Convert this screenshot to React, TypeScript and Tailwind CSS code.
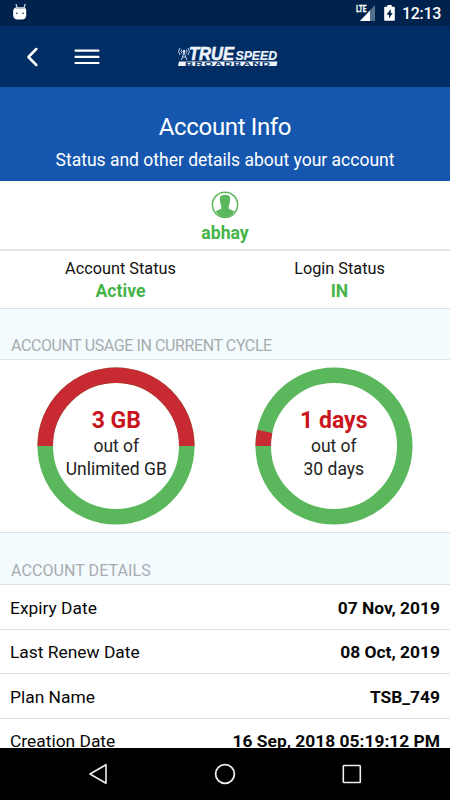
import React from 'react';

const details = [
  { label: 'Expiry Date', value: '07 Nov, 2019' },
  { label: 'Last Renew Date', value: '08 Oct, 2019' },
  { label: 'Plan Name', value: 'TSB_749' },
  { label: 'Creation Date', value: '16 Sep, 2018 05:19:12 PM' },
];

function StatusBar() {
  return (
    <div className="flex h-[26px] shrink-0 items-center bg-[#00234d] pl-3 pr-[9px] text-white">
      <svg width="16" height="20" viewBox="0 0 16 20" fill="#fff">
        <path d="M4 1 5.2 5M13.2 1 12 5" stroke="#c9d5e2" strokeWidth="1.2" />
        <path d="M1.2 7Q1.8 4.5 4.5 4.5H11.8Q14 4.5 14.2 7V12.5Q13.7 16.4 10 16.4H5.5Q1.6 16.4 1.2 12.5Z" />
        <path d="M3.5 4.3h9v1.9H3.5z" fill="#b9c7d7" />
        <circle cx="4.8" cy="10.3" r=".9" fill="#32506f" />
        <circle cx="11" cy="10.3" r=".9" fill="#32506f" />
      </svg>
      <svg className="ml-auto" width="20" height="18" viewBox="0 0 20 18">
        <path d="M19 1V17H4Z" fill="#54708c" />
        <path d="M14 6.5V17H4Z" fill="#fff" />
        <path d="M0 0H11V9H0Z" fill="#00234d" />
        <text x="0" y="8.4" fontSize="9.5" fontWeight="700" fill="#fff" stroke="#fff" strokeWidth=".3" textLength="10.5" lengthAdjust="spacingAndGlyphs" fontFamily="Roboto, sans-serif">LTE</text>
      </svg>
      <svg className="ml-2" width="11" height="18" viewBox="0 0 11 18">
        <path d="M3.3 1h4.4v1.8H10q.8 0 .8.8V16q0 .8-.8.8H1q-.8 0-.8-.8V3.6q0-.8.8-.8h2.3Z" fill="#fff" />
        <path d="M6.7 5 2.5 10.7H5V14.6L8.7 8.9H6.7Z" fill="#00234d" />
      </svg>
      <span className="ml-[7px] mt-px w-[39px] whitespace-nowrap text-[16px] font-medium leading-5 tracking-[-0.3px]">12:13</span>
    </div>
  );
}

function Logo() {
  return (
    <svg width="102" height="22" viewBox="0 0 102 22" fill="#eef3fa" fontFamily="Liberation Sans, sans-serif" fontWeight="700">
      <g fill="none" stroke="#c3d0e2" strokeWidth="1">
        <path d="M3 2Q0 5.5 3 9M5 3.5Q3 5.5 5 7.5M11 2Q14 5.5 11 9M9.2 3.5Q11 5.5 9.2 7.5M7 6 4.5 14M7 6 9.8 14M5.4 11H8.9" />
      </g>
      <circle cx="7" cy="5.2" r="1.2" />
      <text x="12" y="14" fontSize="17.5" fontStyle="italic" textLength="45" lengthAdjust="spacingAndGlyphs" stroke="#eef3fa" strokeWidth=".6">TRUE</text>
      <text x="58.5" y="14" fontSize="12.5" fontStyle="italic" textLength="41.5" lengthAdjust="spacingAndGlyphs" stroke="#eef3fa" strokeWidth=".2">SPEED</text>
      <path d="M2 15.5H100.5L99.5 20H1Z" />
      <text transform="translate(8 19.6) scale(2.3 1)" fontSize="5" fill="#002d64" textLength="37" lengthAdjust="spacing">BROADBAND</text>
    </svg>
  );
}

function NavBar() {
  return (
    <header className="flex h-[61px] shrink-0 items-center bg-[#002d64] pl-[25px]">
      <svg width="14" height="22" viewBox="0 0 14 22" fill="none" stroke="#fff" strokeWidth="2.5" strokeLinecap="round" strokeLinejoin="round">
        <path d="M11.3 3 3.4 11l7.9 8" />
      </svg>
      <svg className="ml-[35px]" width="26" height="18" viewBox="0 0 26 18" fill="none" stroke="#fff" strokeWidth="2.2" strokeLinecap="round">
        <path d="M1.5 2.6H24.5M1.5 8.9H24.5M1.5 15H24.5" />
      </svg>
      <div className="ml-[77px]"><Logo /></div>
    </header>
  );
}

function Ring({ arc, amount, total }: { arc: string; amount: string; total: string }) {
  return (
    <div className="grid h-[158px] w-[158px] place-items-center">
      <svg className="col-start-1 row-start-1" width="158" height="158" viewBox="-79 -79 158 158" fill="none" strokeWidth="15.5">
        <circle r="70.8" stroke="#5bb75c" />
        <path d={arc} stroke="#c72a32" />
      </svg>
      <div className="col-start-1 row-start-1 whitespace-nowrap pb-[2px] text-center text-[17.5px] leading-[23px] text-[#222]">
        <p className="mb-[2px] text-[23px] font-bold leading-[25px] text-[#c9151e]">{amount}</p>
        <p>out of</p>
        <p>{total}</p>
      </div>
    </div>
  );
}

function Status({ label, value }: { label: string; value: string }) {
  return (
    <div className="w-[219px] text-center">
      <p className="text-[16.3px] leading-[23px] text-[#111]">{label}</p>
      <p className="text-[17.6px] font-bold leading-[23px] text-[#45b449]">{value}</p>
    </div>
  );
}

export default function App() {
  return (
    <div className="flex h-[800px] w-[450px] flex-col overflow-hidden bg-white font-['Roboto',sans-serif]">
      <StatusBar />
      <NavBar />
      <main className="flex min-h-0 flex-1 flex-col overflow-hidden">
        <section className="h-[94px] shrink-0 bg-[#1557ae] pt-[25px] text-center text-white">
          <h1 className="text-[24px] leading-[30px] tracking-[-0.35px]">Account Info</h1>
          <p className="mt-[6px] text-[17.5px] leading-[24px]">Status and other details about your account</p>
        </section>
        <section className="flex h-[70px] shrink-0 flex-col items-center border-b-2 border-[#e6e6e6] pt-[10px]">
          <svg width="28" height="28" viewBox="0 0 28 28">
            <circle cx="14" cy="13.8" r="12.6" fill="#fff" stroke="#5bb75c" strokeWidth="1.5" />
            <path d="M9.1 5.5Q10.3 3.7 14 3.7T18.9 5.5Q19.5 8 18.9 10.3 19.1 12 18.1 13.4L17.5 17Q18 18.4 23.4 20.2 19.6 26 14 26T4.6 20.2Q10 18.4 10.5 17L9.9 13.4Q8.9 12 9.1 10.3 8.5 8 9.1 5.5Z" fill="#5bb75c" />
          </svg>
          <p className="mt-[2px] text-[17.6px] font-bold leading-[24px] text-[#45b449]">abhay</p>
        </section>
        <section className="flex h-[57.5px] shrink-0 border-b border-[#dedede] pl-[11px] pt-[6px]">
          <Status label="Account Status" value="Active" />
          <Status label="Login Status" value="IN" />
        </section>
        <h2 className="h-[51.5px] shrink-0 border-b border-[#e0e3e4] bg-[#f3fbff] pl-[11px] pt-[26px] text-[16px] leading-[22px] tracking-[-0.4px] text-[#a8acae]">ACCOUNT USAGE IN CURRENT CYCLE</h2>
        <section className="flex h-[173px] shrink-0 gap-[59.5px] border-b border-[#dedede] pl-[37.3px] pt-[6.6px]">
          <Ring arc="M-70.8 0A70.8 70.8 0 0 1 70.8 0" amount="3 GB" total="Unlimited GB" />
          <Ring arc="M-70.8 0A70.8 70.8 0 0 1 -69.25 -14.72" amount="1 days" total="30 days" />
        </section>
        <h2 className="h-[52px] shrink-0 border-b border-[#dfe2e3] bg-[#f3fbff] pl-[11px] pt-[27px] text-[16px] leading-[22px] tracking-[0.08px] text-[#a8acae]">ACCOUNT DETAILS</h2>
        {details.map(({ label, value }) => (
          <div key={label} className="flex h-[44.5px] shrink-0 items-center justify-between border-b border-[#e0e0e0] px-[10px] pt-[2px] text-[17.4px] leading-[26px] text-[#080808]">
            <span>{label}</span>
            <span className="font-bold">{value}</span>
          </div>
        ))}
      </main>
      <nav className="flex h-[52px] shrink-0 items-center bg-black pl-[88px]">
        <svg width="20" height="22" viewBox="0 0 20 22" fill="none" stroke="#eee" strokeWidth="1.6" strokeLinejoin="round"><path d="M18 1.7V20.3L2 11Z" /></svg>
        <svg className="ml-[106px]" width="22" height="22" viewBox="0 0 22 22" fill="none" stroke="#eee" strokeWidth="1.8"><circle cx="11" cy="11" r="9.4" /></svg>
        <svg className="ml-[106px]" width="20" height="20" viewBox="0 0 20 20" fill="none" stroke="#eee" strokeWidth="1.6"><rect x="1.3" y="1.5" width="17" height="17" rx=".7" /></svg>
      </nav>
    </div>
  );
}
